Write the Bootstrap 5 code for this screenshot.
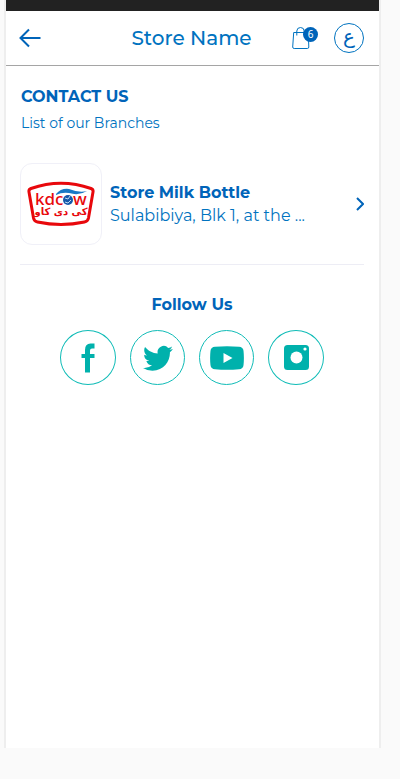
<!DOCTYPE html>
<html lang="en">
<head>
<meta charset="utf-8">
<meta name="viewport" content="width=device-width, initial-scale=1">
<title>Store Name</title>
<link href="https://cdn.jsdelivr.net/npm/bootstrap@5.3.0/dist/css/bootstrap.min.css" rel="stylesheet">
<style>
  :root { --blue: #0064b9; --blue-light: #0073c0; --teal: #00b1ac; }
  body { background: #fafafa; color: var(--blue); font-family: Montserrat, Inter, "DejaVu Sans", sans-serif; font-size: 16px; }
  a, a:hover { color: inherit; text-decoration: none; }
  .screen { margin: 0 19px 31px 4px; min-height: calc(100vh - 31px); background: #fff; border: solid #eee; border-width: 0 2px; }
  .status-strip { height: 11px; background: #222; }
  .app-header { height: 55px; padding: 0 15px 0 13px; border-bottom: 1px solid #a5a5a5; display: grid; grid-template-columns: 1fr auto 1fr; align-items: center; }
  .app-title { font-size: 20px; line-height: 28px; font-weight: 500; color: var(--blue-light); }
  .bag { width: 26px; height: 26px; }
  .bag-count { width: 15px; height: 15px; top: 2px; right: 0; font-size: 10px; line-height: 15px; font-family: "Noto Sans", sans-serif; background: var(--blue); }
  .lang { width: 30px; height: 30px; border: 1px solid var(--blue-light); color: var(--blue); font: 20px/20px "DejaVu Sans", sans-serif; padding: 0 0 5px; }
  main { padding: 20px 15px 0 14px; }
  .intro { padding-left: 1px; }
  .heading { font-size: 16px; line-height: 22px; font-weight: 700; }
  .sub { font-size: 14px; line-height: 20px; color: var(--blue-light); margin-top: 5px; }
  .branch { padding: 30px 0 19px; border-bottom: 1px solid #ededf5; }
  .thumb { width: 82px; height: 82px; border: 1px solid #f0f0f8; border-radius: 12px; }
  .line { font-size: 16px; line-height: 23px; }
  .address { color: var(--blue-light); max-width: 200px; }
  .follow { padding-top: 29px; }
  .social { width: 55px; height: 55px; border: 1px solid #10bcb7; color: var(--teal) !important; }
  .social.wide { width: 56px; }
  .socials { gap: 14px; margin-top: 14px; }
</style>
<script src="https://cdn.jsdelivr.net/npm/bootstrap@5.3.0/dist/js/bootstrap.bundle.min.js" defer></script>
</head>
<body>
<div class="screen">
  <div class="status-strip"></div>
  <header class="app-header">
    <a href="#" aria-label="Back" class="d-flex">
      <svg width="22" height="20" viewBox="0 0 22 20" fill="none" stroke="#0064b9" stroke-width="2"><path d="M10 1.500 1.500 10l8.500 8.500M1.500 10H21.500"/></svg>
    </a>
    <h1 class="app-title m-0">Store Name</h1>
    <div class="d-flex justify-content-end align-items-center gap-3">
      <a href="#" class="bag position-relative d-block" aria-label="Bag, 6 items">
        <svg class="d-block" width="18" height="26" viewBox="0 0 18 26" fill="none" stroke="#0073c0"><path d="M1.700 7.500h14.600l.500 14.500q0 1.500-1.500 1.500H2.200Q.700 23.500.700 22ZM4.800 10.500V6Q5 2.500 8.500 2.500T12.200 6v4.500"/></svg>
        <span class="bag-count position-absolute rounded-circle text-white text-center">6</span>
      </a>
      <button type="button" class="lang rounded-circle bg-white d-flex align-items-center justify-content-center" lang="ar" aria-label="العربية">ع</button>
    </div>
  </header>
  <main>
    <div class="intro">
      <h2 class="heading m-0">CONTACT US</h2>
      <p class="sub mb-0">List of our Branches</p>
    </div>
    <a href="#" class="branch d-flex align-items-center">
      <span class="thumb d-flex align-items-center justify-content-center flex-shrink-0">
        <svg width="68" height="46" viewBox="0 0 68 46" role="img" aria-label="kdcow">
          <path d="M4 7.500Q34-3 64 7.500 66.500 8.500 66 11L61.500 37q-.700 3.500-4 4-23.500 5-47 0-3.300-.500-4-4L2 11Q1.500 8.500 4 7.500Z" fill="#fff" stroke="#e8080c" stroke-width="3"/>
          <text x="8" y="24" font-family="Noto Sans, sans-serif" font-weight="500" font-size="17" fill="#e8080c">kdc</text>
          <circle cx="41" cy="19" r="5" fill="#1558aa"/><path d="M38 17l3 1 2-3M38 21l3 1 3-3" stroke="#bcd9f2" fill="none"/>
          <text x="46" y="24" font-family="Noto Sans, sans-serif" font-weight="500" font-size="17" fill="#e8080c">w</text>
          <path d="M29 13Q34 7 42 8q10 4 18 2-8 5-18 2-7-1-13 2Z" fill="#1979c5"/>
          <text x="34" y="34" text-anchor="middle" direction="rtl" font-family="DejaVu Sans, sans-serif" font-weight="700" font-size="10" fill="#e8080c">کی دی کاو</text>
        </svg>
      </span>
      <span class="ps-1 ms-1 flex-grow-1 overflow-hidden">
        <strong class="line d-block">Store Milk Bottle</strong>
        <span class="line address d-block text-truncate">Sulabibiya, Blk 1, at the ...</span>
      </span>
      <svg class="flex-shrink-0" width="8" height="14" viewBox="0 0 8 14" fill="none" stroke="#0064b9" stroke-width="2"><path d="m1 1 6 6-6 6"/></svg>
    </a>
    <section class="follow text-center">
      <h2 class="heading m-0">Follow Us</h2>
      <div class="socials d-flex justify-content-center">
        <a href="#" class="social wide rounded-circle d-flex align-items-center justify-content-center" aria-label="Facebook">
          <svg width="14" height="30" viewBox="0 0 14 30" fill="currentColor"><path d="M4 29.500V15H.500v-4H4V7Q4 .500 9.500.500h4v5H11Q9 5.500 9 7.500V11h4.500v4H9v14.500Z"/></svg>
        </a>
        <a href="#" class="social rounded-circle d-flex align-items-center justify-content-center" aria-label="Twitter">
          <svg width="30" height="26" viewBox="0 1.500 24 20.500" preserveAspectRatio="none" fill="currentColor"><path d="M23.950 4.570a10 10 0 0 1-2.820.77 4.960 4.960 0 0 0 2.160-2.720c-.95.550-2 .950-3.120 1.180a4.920 4.920 0 0 0-8.380 4.480C7.690 8.100 4.070 6.130 1.640 3.160a4.820 4.820 0 0 0-.670 2.480c0 1.710.870 3.210 2.190 4.100a4.900 4.900 0 0 1-2.230-.620v.060a4.920 4.920 0 0 0 3.950 4.830 5 5 0 0 1-2.210.080 4.940 4.940 0 0 0 4.600 3.420A9.870 9.870 0 0 1 0 19.540a13.990 13.990 0 0 0 7.550 2.210c9.050 0 14-7.500 14-13.980q0-.320-.020-.640a9.940 9.940 0 0 0 2.420-2.560Z"/></svg>
        </a>
        <a href="#" class="social rounded-circle d-flex align-items-center justify-content-center" aria-label="YouTube">
          <svg width="34" height="24" viewBox="0 0 34 24" fill="currentColor" fill-rule="evenodd"><path d="M5 .700Q17-.300 29 .700q4 .300 4.500 4 .800 7.300 0 14.600-.500 3.700-4.500 4-12 1-24 0-4-.300-4.500-4-.800-7.300 0-14.600Q1 1 5 .700ZM13.500 7v10l9-5Z"/></svg>
        </a>
        <a href="#" class="social wide rounded-circle d-flex align-items-center justify-content-center" aria-label="Instagram">
          <svg width="25" height="25" viewBox="0 0 25 25"><rect width="25" height="25" rx="3.500" fill="currentColor"/><circle cx="12.500" cy="12.500" r="6" fill="#fff"/><circle cx="21" cy="4" r="1.600" fill="#fff"/></svg>
        </a>
      </div>
    </section>
  </main>
</div>
</body>
</html>
